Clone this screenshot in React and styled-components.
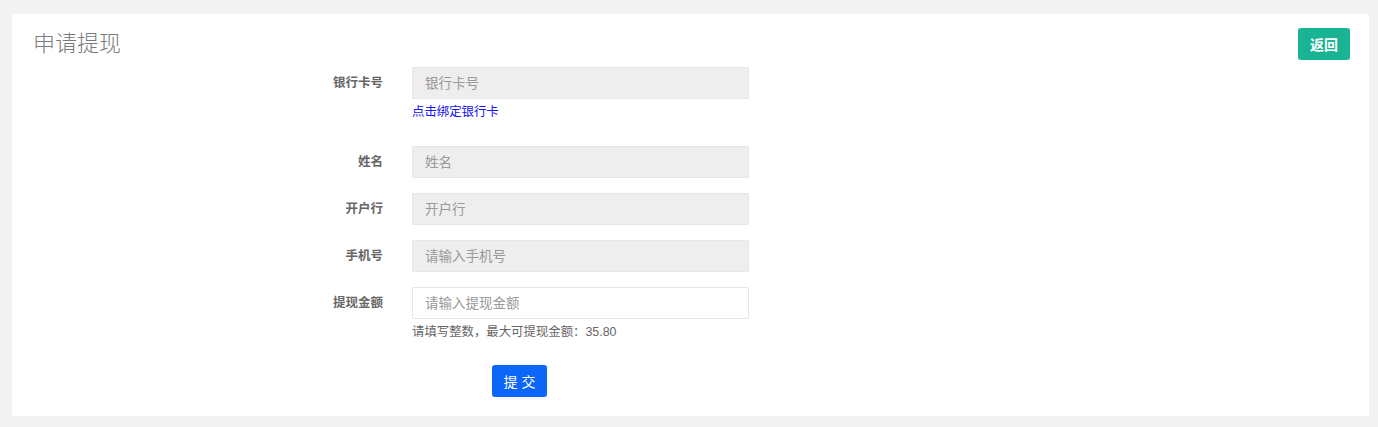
import styled, { createGlobalStyle } from "styled-components";

const GlobalStyle = createGlobalStyle`
  body {
    margin: 0;
    background: #f2f2f2;
    font-family: "Liberation Sans", "Noto Sans CJK SC", sans-serif;
  }
`;

const Page = styled.div`
  padding: 14px 9px 11px 12px;
`;

const Panel = styled.div`
  background: #fff;
  padding: 14px 19px 19px 21px;
  height: 402px;
  box-sizing: border-box;
`;

const Header = styled.div`
  display: flex;
  align-items: center;
  justify-content: space-between;
  height: 32px;
`;

const Title = styled.h2`
  margin: 0;
  font-size: 22px;
  font-weight: 300;
  color: #7a7a7a;
  line-height: 32px;
`;

const BackButton = styled.button`
  width: 52px;
  height: 32px;
  border: none;
  border-radius: 3px;
  background: #1ab394;
  color: #fff;
  font-family: inherit;
  font-size: 14px;
  font-weight: 700;
  cursor: pointer;
`;

const Form = styled.form`
  margin-top: 7px;
`;

const Row = styled.div`
  display: grid;
  grid-template-columns: 350px 337px;
  column-gap: 29px;
  align-items: start;
  margin-bottom: 15px;
`;

const Label = styled.label`
  text-align: right;
  font-size: 12.5px;
  font-weight: 700;
  color: #666;
  line-height: 32px;
`;

const Input = styled.input`
  display: block;
  width: 100%;
  height: 32px;
  box-sizing: border-box;
  padding: 0 12px;
  border: 1px solid #e5e6e7;
  border-radius: 1px;
  background: ${(p) => (p.disabled ? "#eeeeee" : "#fff")};
  font-family: inherit;
  font-size: 13.5px;
  color: #333;
  outline: none;

  &::placeholder {
    color: #999;
  }
`;

const BindLink = styled.a`
  display: block;
  margin: 4px 0 10px;
  font-size: 12.4px;
  line-height: 18px;
  color: #1212f2;
  text-decoration: none;
`;

const Hint = styled.div`
  margin-top: 4px;
  font-size: 12.4px;
  line-height: 18px;
  color: #666;
`;

const Actions = styled.div`
  padding-left: 459px;
  margin-top: 24px;
`;

const SubmitButton = styled.button`
  width: 55px;
  height: 32px;
  border: none;
  border-radius: 3px;
  background: #0d66fa;
  color: #fff;
  font-family: inherit;
  font-size: 14px;
  cursor: pointer;
`;

const fields = [
  { label: "银行卡号", placeholder: "银行卡号", disabled: true, link: true },
  { label: "姓名", placeholder: "姓名", disabled: true },
  { label: "开户行", placeholder: "开户行", disabled: true },
  { label: "手机号", placeholder: "请输入手机号", disabled: true },
  { label: "提现金额", placeholder: "请输入提现金额", hint: "请填写整数，最大可提现金额：35.80" },
];

export default function App() {
  return (
    <>
      <GlobalStyle />
      <Page>
        <Panel>
          <Header>
            <Title>申请提现</Title>
            <BackButton type="button">返回</BackButton>
          </Header>
          <Form onSubmit={(e) => e.preventDefault()}>
            {fields.map((f) => (
              <Row key={f.label}>
                <Label>{f.label}</Label>
                <div>
                  <Input placeholder={f.placeholder} disabled={f.disabled} />
                  {f.link && <BindLink href="#">点击绑定银行卡</BindLink>}
                  {f.hint && <Hint>{f.hint}</Hint>}
                </div>
              </Row>
            ))}
            <Actions>
              <SubmitButton type="submit">提 交</SubmitButton>
            </Actions>
          </Form>
        </Panel>
      </Page>
    </>
  );
}
